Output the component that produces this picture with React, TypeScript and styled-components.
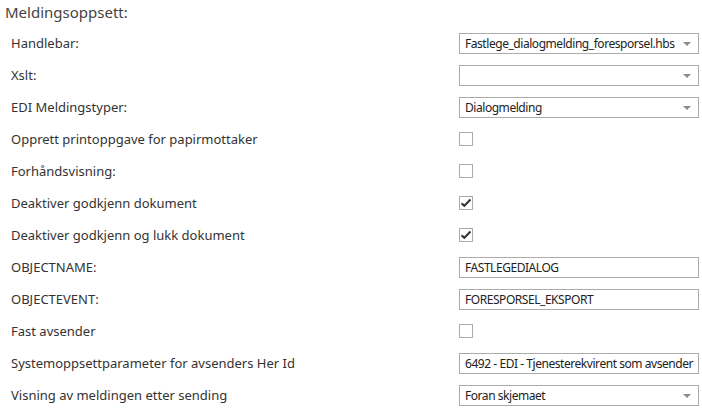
import React from "react";
import styled, { createGlobalStyle } from "styled-components";

const Global = createGlobalStyle`
  html, body { margin: 0; padding: 0; background: #fff; }
  body { font-family: "Noto Sans", "Open Sans", sans-serif; }
`;

const Page = styled.div`
  width: 702px;
  padding: 0 4px 0 0;
  box-sizing: border-box;
`;

const Heading = styled.div`
  height: 27px;
  padding-left: 5px;
  font-size: 15px;
  line-height: 25px;
  color: #444;
`;

const Form = styled.div`
  display: grid;
  grid-template-columns: 459px 1fr;
  grid-auto-rows: 32px;
  align-items: center;
`;

const Label = styled.div`
  padding-left: 11px;
  font-size: 13px;
  line-height: 18px;
  color: #333;
  white-space: nowrap;
`;

const Box = styled.div<{ $select?: boolean }>`
  position: relative;
  height: 21px;
  box-sizing: border-box;
  border: 1px solid #ababab;
  background: #fff;
  padding: 0 ${(p) => (p.$select ? "20px" : "3px")} 0 5px;
  font-size: 12px;
  letter-spacing: -0.45px;
  line-height: 19px;
  color: #222;
  white-space: nowrap;
  overflow: hidden;
  width: 240px;
`;

const Arrow = styled.span`
  position: absolute;
  right: 7px;
  top: 8px;
  width: 0;
  height: 0;
  border-left: 4px solid transparent;
  border-right: 4px solid transparent;
  border-top: 4px solid #8a8a8a;
`;

const Check = styled.div`
  width: 14px;
  height: 14px;
  box-sizing: border-box;
  border: 1px solid #aaa;
  background: #fff;
  display: flex;
  align-items: center;
  justify-content: center;
`;

type Row =
  | { label: string; kind: "select"; value: string }
  | { label: string; kind: "text"; value: string }
  | { label: string; kind: "check"; checked: boolean };

const rows: Row[] = [
  { label: "Handlebar:", kind: "select", value: "Fastlege_dialogmelding_foresporsel.hbs" },
  { label: "Xslt:", kind: "select", value: "" },
  { label: "EDI Meldingstyper:", kind: "select", value: "Dialogmelding" },
  { label: "Opprett printoppgave for papirmottaker", kind: "check", checked: false },
  { label: "Forhåndsvisning:", kind: "check", checked: false },
  { label: "Deaktiver godkjenn dokument", kind: "check", checked: true },
  { label: "Deaktiver godkjenn og lukk dokument", kind: "check", checked: true },
  { label: "OBJECTNAME:", kind: "text", value: "FASTLEGEDIALOG" },
  { label: "OBJECTEVENT:", kind: "text", value: "FORESPORSEL_EKSPORT" },
  { label: "Fast avsender", kind: "check", checked: false },
  { label: "Systemoppsettparameter for avsenders Her Id", kind: "text", value: "6492 - EDI - Tjenesterekvirent som avsender" },
  { label: "Visning av meldingen etter sending", kind: "select", value: "Foran skjemaet" },
];

const Tick = () => (
  <svg width="12" height="12" viewBox="0 0 12 12">
    <path d="M1.5 6.2 L4.3 8.8 L10.5 2.5" fill="none" stroke="#333" strokeWidth="2" />
  </svg>
);

export default function App() {
  return (
    <Page>
      <Global />
      <Heading>Meldingsoppsett:</Heading>
      <Form>
        {rows.map((r, i) => (
          <React.Fragment key={i}>
            <Label>{r.label}</Label>
            <div>
              {r.kind === "select" && (
                <Box $select>
                  {r.value}
                  <Arrow />
                </Box>
              )}
              {r.kind === "text" && <Box>{r.value}</Box>}
              {r.kind === "check" && <Check>{r.checked && <Tick />}</Check>}
            </div>
          </React.Fragment>
        ))}
      </Form>
    </Page>
  );
}
